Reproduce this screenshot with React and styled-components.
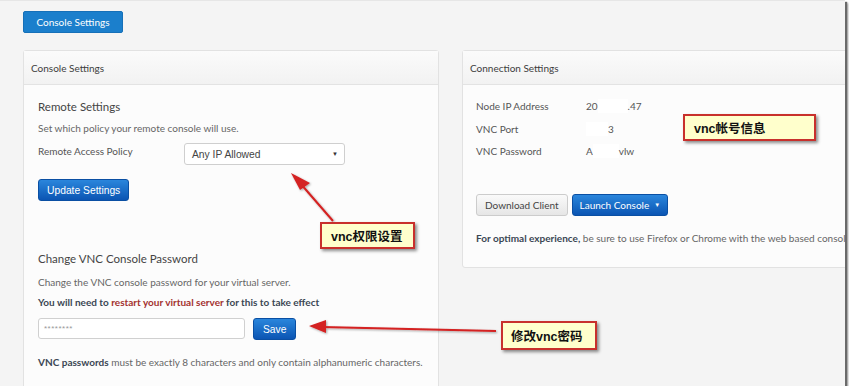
import React from "react";
import styled, { createGlobalStyle } from "styled-components";

const Global = createGlobalStyle`
  html, body { margin: 0; padding: 0; background: #fff; }
  body { font-family: Lato, "Open Sans", sans-serif; }
`;

const Frame = styled.div`
  position: relative;
  width: 845px;
  height: 386px;
  background: #f4f4f4;
  overflow: hidden;
  box-shadow: 2px 2px 1px #6a6a6a, 3px 3px 2px #999;
  border-top: 1px solid #e6e6e6;
  box-sizing: border-box;
`;

const Page = styled.div`
  padding: 10px 0 0 23px;
  display: flex;
  flex-direction: column;
  gap: 17px;
`;

const TopButton = styled.div`
  align-self: flex-start;
  width: 100px;
  height: 22px;
  box-sizing: border-box;
  background: #1b7fcc;
  border: 1px solid #1670b8;
  border-radius: 2px;
  color: #fff;
  font-size: 10px;
  display: flex;
  align-items: center;
  justify-content: center;
`;

const Columns = styled.div`
  display: flex;
  gap: 23px;
  align-items: flex-start;
`;

const Panel = styled.div`
  width: ${(p) => p.$w}px;
  flex: none;
  background: #fcfcfc;
  border: 1px solid #e2e2e2;
  border-radius: 3px;
  box-sizing: border-box;
  ${(p) => (p.$tall ? "height: 360px;" : "")}
`;

const PanelHead = styled.div`
  height: 34px;
  box-sizing: border-box;
  padding-left: 7px;
  display: flex;
  align-items: center;
  background: linear-gradient(#fbfbfb, #f2f2f2);
  border-bottom: 1px solid #e3e3e3;
  font-size: 10px;
  color: #3d3d3d;
`;

const PanelBody = styled.div`
  padding: ${(p) => p.$pad};
  display: flex;
  flex-direction: column;
`;

const Title = styled.div`
  font-size: 11.5px;
  line-height: 20px;
  color: #444;
  margin-top: ${(p) => p.$mt || 0}px;
`;

const Text = styled.div`
  font-size: 10px;
  line-height: 16px;
  color: ${(p) => (p.$strong ? "#3b4754" : "#666")};
  font-weight: ${(p) => (p.$strong ? 700 : 400)};
  margin-top: ${(p) => p.$mt || 0}px;
  white-space: nowrap;
`;

const B = styled.b`
  color: #3b4754;
`;

const Red = styled.span`
  color: #a3312f;
`;

const FormRow = styled.div`
  display: flex;
  align-items: flex-start;
  margin-top: ${(p) => p.$mt || 0}px;
`;

const FieldLabel = styled.div`
  width: 146px;
  font-size: 10px;
  line-height: 16px;
  color: #555;
`;

const Select = styled.div`
  width: 161px;
  height: 22px;
  box-sizing: border-box;
  border: 1px solid #cfcfcf;
  border-radius: 3px;
  background: #fff;
  display: flex;
  align-items: center;
  justify-content: space-between;
  padding: 0 6px 0 7px;
  font-family: "Liberation Sans", Arial, sans-serif;
  font-size: 10.3px;
  color: #444;
`;

const Caret = styled.span`
  font-size: 6px;
  color: ${(p) => (p.$light ? "#fff" : "#333")};
`;

const BlueButton = styled.div`
  align-self: flex-start;
  height: 22px;
  padding: 0 ${(p) => p.$px || 8}px;
  box-sizing: border-box;
  border: 1px solid #0a4fa3;
  border-radius: 3px;
  background: linear-gradient(#2a86dc, #0b55b3);
  color: #fff;
  font-family: ${(p) => (p.$sans ? "Lato, sans-serif" : '"Liberation Sans", Arial, sans-serif')};
  font-size: ${(p) => p.$fs || 10.3}px;
  display: flex;
  align-items: center;
  gap: 5px;
  margin-top: ${(p) => p.$mt || 0}px;
  flex: none;
`;

const GrayButton = styled.div`
  height: 22px;
  padding: 0 8px;
  box-sizing: border-box;
  border: 1px solid #ccc;
  border-radius: 3px;
  background: linear-gradient(#fafafa, #e6e6e6);
  color: #444;
  font-size: 10px;
  display: flex;
  align-items: center;
`;

const Input = styled.div`
  width: 207px;
  height: 21px;
  box-sizing: border-box;
  border: 1px solid #d0d0d0;
  border-radius: 3px;
  background: #fff;
  padding-left: 5px;
  display: flex;
  align-items: center;
  font-family: "Liberation Sans", Arial, sans-serif;
  font-size: 8px;
  color: #999;
  letter-spacing: 0.5px;
`;

const InlineRow = styled.div`
  display: flex;
  gap: ${(p) => p.$gap}px;
  margin-top: ${(p) => p.$mt || 0}px;
`;

const InfoRow = styled.div`
  display: flex;
  height: 22.5px;
  align-items: center;
  font-size: 10px;
  color: #555;
`;

const InfoLabel = styled.div`
  width: 110px;
`;

const InfoValue = styled.div`
  display: flex;
  align-items: center;
`;

const Redact = styled.span`
  display: inline-block;
  width: ${(p) => p.$w}px;
  height: 14px;
  background: #fff;
`;

const Note = styled.div`
  position: absolute;
  left: ${(p) => p.$x}px;
  top: ${(p) => p.$y}px;
  width: ${(p) => p.$w}px;
  height: ${(p) => p.$h}px;
  box-sizing: border-box;
  background: #ffffcc;
  border: 2px solid #c8302c;
  box-shadow: 2px 2px 3px rgba(0, 0, 0, 0.45);
  display: flex;
  align-items: center;
  padding-left: ${(p) => p.$pl}px;
  font-family: "Liberation Sans", "Noto Sans CJK SC", sans-serif;
  font-weight: 700;
  font-size: 12.5px;
  color: #111;
`;

const Arrows = styled.svg`
  position: absolute;
  left: 0;
  top: 0;
  pointer-events: none;
`;

export default function App() {
  return (
    <>
      <Global />
      <Frame>
        <Page>
          <TopButton>Console Settings</TopButton>
          <Columns>
            <Panel $w={416} $tall>
              <PanelHead>Console Settings</PanelHead>
              <PanelBody $pad="12px 0 0 14px">
                <Title>Remote Settings</Title>
                <Text $mt={3}>Set which policy your remote console will use.</Text>
                <FormRow $mt={7}>
                  <FieldLabel>Remote Access Policy</FieldLabel>
                  <Select>
                    Any IP Allowed
                    <Caret>▼</Caret>
                  </Select>
                </FormRow>
                <BlueButton $mt={14} $px={8}>Update Settings</BlueButton>
                <Title $mt={48}>Change VNC Console Password</Title>
                <Text $mt={5}>Change the VNC console password for your virtual server.</Text>
                <Text $mt={4} $strong>
                  You will need to <Red>restart your virtual server</Red> for this to take effect
                </Text>
                <InlineRow $gap={8} $mt={8}>
                  <Input>********</Input>
                  <BlueButton $px={9}>Save</BlueButton>
                </InlineRow>
                <Text $mt={14}>
                  <B>VNC passwords</B> must be exactly 8 characters and only contain alphanumeric characters.
                </Text>
              </PanelBody>
            </Panel>
            <Panel $w={400}>
              <PanelHead>Connection Settings</PanelHead>
              <PanelBody $pad="10px 0 21px 13px">
                <InfoRow>
                  <InfoLabel>Node IP Address</InfoLabel>
                  <InfoValue>
                    20<Redact $w={30} />.47
                  </InfoValue>
                </InfoRow>
                <InfoRow>
                  <InfoLabel>VNC Port</InfoLabel>
                  <InfoValue>
                    <Redact $w={22} />3
                  </InfoValue>
                </InfoRow>
                <InfoRow>
                  <InfoLabel>VNC Password</InfoLabel>
                  <InfoValue>
                    A<Redact $w={26} />vlw
                  </InfoValue>
                </InfoRow>
                <InlineRow $gap={4} $mt={31}>
                  <GrayButton>Download Client</GrayButton>
                  <BlueButton $sans $fs={10} $px={7}>
                    Launch Console <Caret $light>▼</Caret>
                  </BlueButton>
                </InlineRow>
                <Text $mt={14}>
                  <B>For optimal experience,</B> be sure to use Firefox or Chrome with the web based console.
                </Text>
              </PanelBody>
            </Panel>
          </Columns>
        </Page>

        <Arrows width="845" height="386" viewBox="0 0 845 386">
          <defs>
            <filter id="sh" x="-20%" y="-20%" width="140%" height="140%">
              <feDropShadow dx="1" dy="1" stdDeviation="0.8" floodColor="#000" floodOpacity="0.35" />
            </filter>
          </defs>
          <g filter="url(#sh)" fill="#d42020" stroke="#d42020">
            <line x1="333" y1="220" x2="300" y2="182" strokeWidth="2" />
            <polygon points="291,172 310,182 300,189" stroke="none" />
            <line x1="496" y1="330" x2="322" y2="326" strokeWidth="2" />
            <polygon points="309,325 326,319 326,332" stroke="none" />
          </g>
        </Arrows>

        <Note $x={320} $y={221} $w={95} $h={27} $pl={9}>vnc权限设置</Note>
        <Note $x={683} $y={113} $w={133} $h={27} $pl={9}>vnc帐号信息</Note>
        <Note $x={501} $y={320} $w={96} $h={29} $pl={8}>修改vnc密码</Note>
      </Frame>
    </>
  );
}
